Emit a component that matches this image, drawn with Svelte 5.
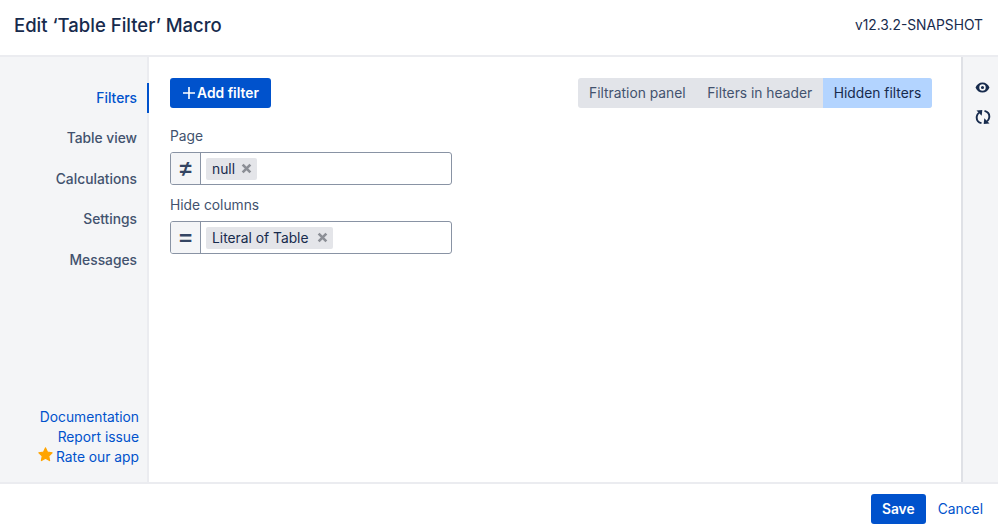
<script>
    // Sidebar items and the fields shown in the hidden filters tab
    const navItems = ['Filters', 'Table view', 'Calculations', 'Settings', 'Messages'];
    const tabs = ['Filtration panel', 'Filters in header', 'Hidden filters'];
    const fields = [
        { label: 'Page', op: '≠', tag: 'null', gap: 6 },
        { label: 'Hide columns', op: '=', tag: 'Literal of Table', gap: 9 },
    ];
    let activeTab = 'Hidden filters';
</script>

<div class="dialog">
    <header>
        <h1>Edit ‘Table Filter’ Macro</h1>
        <span class="version">v12.3.2-SNAPSHOT</span>
    </header>

    <div class="body">
        <aside>
            <nav>
                {#each navItems as item, i}
                    <div class="nav-item" class:active={i === 0}>{item}</div>
                {/each}
            </nav>
            <div class="links">
                <span>Documentation</span>
                <span>Report issue</span>
                <span class="rate">
                    <svg width="15" height="15" viewBox="0 0 24 24">
                        <path d="M12 1.500l3.200 6.800 7.300.9-5.400 5.100 1.400 7.400L12 18.100l-6.500 3.600 1.400-7.400L1.500 9.200l7.300-.9z" fill="#ffa400" stroke="#ffa400" stroke-width="2" stroke-linejoin="round" />
                    </svg>
                    Rate our app
                </span>
            </div>
        </aside>

        <main>
            <div class="toolbar">
                <button class="add">
                    <svg width="14" height="14" viewBox="0 0 14 14">
                        <path d="M7 1v12M1 7h12" stroke="#fff" stroke-width="1.600" fill="none" />
                    </svg>
                    Add filter
                </button>
                <div class="tabs">
                    {#each tabs as tab}
                        <button class="tab" class:selected={tab === activeTab} onclick={() => (activeTab = tab)}>{tab}</button>
                    {/each}
                </div>
            </div>

            {#each fields as field}
                <div class="field">
                    <div class="label">{field.label}</div>
                    <div class="input">
                        <span class="op">{field.op}</span>
                        <span class="tag" style="gap: {field.gap}px">
                            {field.tag}
                            <svg width="11" height="11" viewBox="0 0 10 10">
                                <path d="M1.500 1.500l7 7M8.500 1.500l-7 7" stroke="#8c8f96" stroke-width="2.400" fill="none" />
                            </svg>
                        </span>
                    </div>
                </div>
            {/each}
        </main>

        <div class="side-tools">
            <svg width="15" height="11" viewBox="0 0 16 12">
                <path fill-rule="evenodd" d="M8 .5C4.500.5 1.600 2.700.4 6c1.200 3.300 4.100 5.500 7.600 5.500s6.400-2.200 7.600-5.500C14.400 2.700 11.500.5 8 .5zM8 9.500a3.500 3.500 0 1 1 0-7 3.500 3.500 0 0 1 0 7zM8 4.300a1.700 1.700 0 1 0 0 3.400 1.700 1.700 0 0 0 0-3.400z" fill="#172b4d" />
            </svg>
            <svg width="16" height="16" viewBox="0 0 16 16" fill="none" stroke="#172b4d" stroke-width="1.900">
                <path d="M6.500 14.200C3.200 13.400 1.300 10.800 1.800 7.400 2 5.900 2.800 4.700 4 3.800" />
                <path d="M1.500 1.500L7.300 1 6.700 6.700z" fill="#172b4d" stroke="none" />
                <path d="M9.500 1.800c3.300.8 5.200 3.400 4.700 6.800-.2 1.500-1 2.700-2.200 3.600" />
                <path d="M14.500 14.500L8.700 15l.6-5.700z" fill="#172b4d" stroke="none" />
            </svg>
        </div>
    </div>

    <footer>
        <button class="save">Save</button>
        <span class="cancel">Cancel</span>
    </footer>
</div>

<style>
    :global(body) {
        margin: 0;
        background: #fff;
    }

    .dialog {
        width: 998px;
        height: 530px;
        display: flex;
        flex-direction: column;
        font-family: Inter, "Liberation Sans", sans-serif;
        font-size: 13.8px;
        color: #42526e;
    }

    header {
        height: 57px;
        box-sizing: border-box;
        border-bottom: 2px solid #ebecf0;
        display: flex;
        align-items: center;
        justify-content: space-between;
        padding: 0 15px 5px 14px;
        flex-shrink: 0;
    }

    h1 {
        margin: 0;
        font-size: 18.5px;
        font-weight: 500;
        color: #172b4d;
    }

    .version {
        color: #172b4d;
    }

    .body {
        flex: 1;
        display: flex;
        min-height: 0;
    }

    aside {
        width: 149px;
        box-sizing: border-box;
        background: #f4f5f7;
        border-right: 2px solid #ebecf0;
        display: flex;
        flex-direction: column;
        justify-content: space-between;
        align-items: flex-end;
        padding: 26px 0 15px;
        flex-shrink: 0;
    }

    nav {
        display: flex;
        flex-direction: column;
        gap: 10.400px;
        align-items: flex-end;
    }

    .nav-item {
        height: 30px;
        line-height: 30px;
        padding-right: 10px;
        font-weight: 500;
    }

    .nav-item.active {
        color: #0052cc;
        border-right: 2px solid #0052cc;
        margin-right: -2px;
    }

    .links {
        display: flex;
        flex-direction: column;
        align-items: flex-end;
        padding-right: 8px;
        color: #0052cc;
        line-height: 20px;
    }

    .rate {
        display: flex;
        gap: 3px;
    }

    main {
        flex: 1;
        padding: 21px 29px 0 21px;
    }

    .toolbar {
        display: flex;
        justify-content: space-between;
        align-items: center;
        margin-bottom: 18px;
    }

    button {
        font: inherit;
        border: none;
    }

    .add {
        height: 30px;
        width: 101px;
        background: #0052cc;
        color: #fff;
        border-radius: 3px;
        font-weight: 600;
        display: flex;
        align-items: center;
        justify-content: center;
        gap: 1px;
        padding: 0;
    }

    .tabs {
        display: flex;
        background: #e2e4e9;
        border-radius: 3px;
        overflow: hidden;
    }

    .tab {
        height: 30px;
        padding: 0 10.800px;
        background: none;
        color: #42526e;
    }

    .tab.selected {
        background: #b3d4ff;
        color: #172b4d;
    }

    .field {
        margin-bottom: 10px;
    }

    .label {
        line-height: 20px;
        margin-bottom: 6px;
    }

    .input {
        width: 282px;
        height: 33px;
        box-sizing: border-box;
        border: 1px solid #8993a4;
        border-radius: 3px;
        display: flex;
        align-items: center;
    }

    .op {
        width: 30px;
        height: 100%;
        box-sizing: border-box;
        padding-bottom: 3px;
        background: #f4f5f7;
        border-right: 1px solid #8993a4;
        border-radius: 2px 0 0 2px;
        display: flex;
        align-items: center;
        justify-content: center;
        font-size: 25px;
        font-weight: 500;
        color: #344563;
        flex-shrink: 0;
    }

    .tag {
        margin-left: 5px;
        height: 22px;
        padding: 0 5px 0 6px;
        background: #e4e5e9;
        border-radius: 2px;
        color: #172b4d;
        display: flex;
        align-items: center;
    }

    .side-tools {
        width: 37px;
        box-sizing: border-box;
        background: #f4f5f7;
        border-left: 2px solid #dfe1e6;
        display: flex;
        flex-direction: column;
        align-items: center;
        gap: 16px;
        padding: 25px 0 0 4px;
        flex-shrink: 0;
    }

    footer {
        height: 48px;
        box-sizing: border-box;
        border-top: 2px solid #ebecf0;
        display: flex;
        align-items: center;
        justify-content: flex-end;
        padding: 4px 15px 0 0;
        gap: 12px;
        flex-shrink: 0;
    }

    .save {
        width: 55px;
        height: 30px;
        background: #0052cc;
        color: #fff;
        border-radius: 3px;
        font-weight: 600;
        padding: 0;
    }

    .cancel {
        color: #0052cc;
    }
</style>
